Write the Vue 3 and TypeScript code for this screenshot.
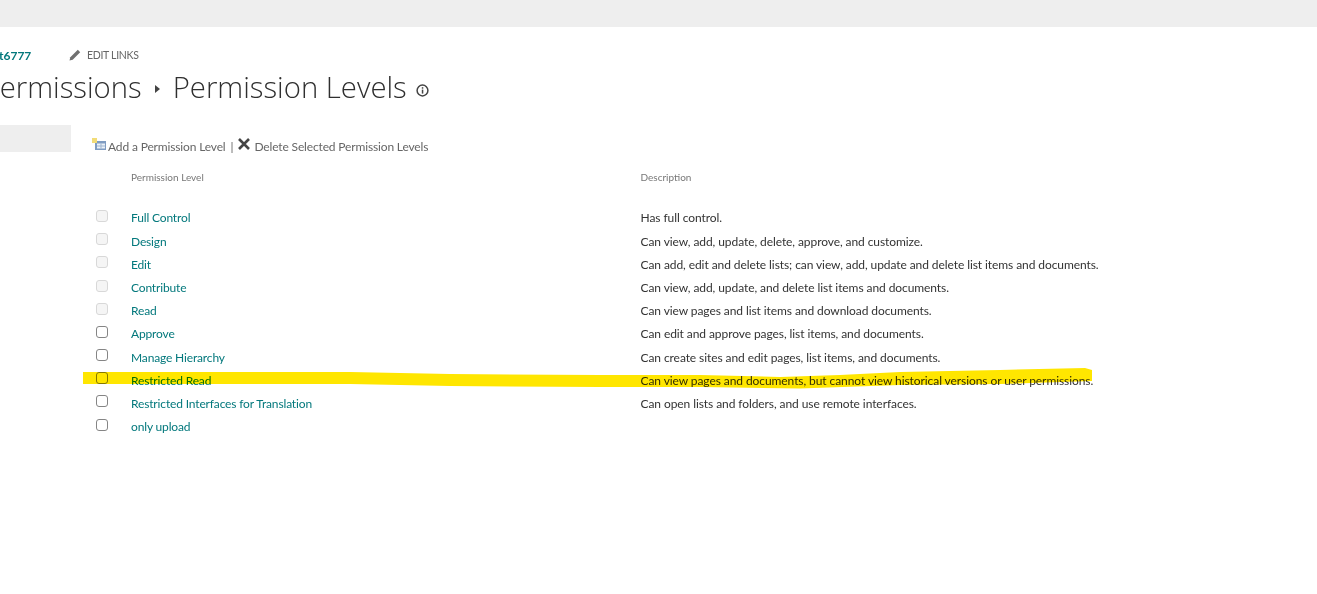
<script setup lang="ts">
interface Level { name: string; desc: string; locked: boolean }
const levels: Level[] = [
  { name: 'Full Control', desc: 'Has full control.', locked: true },
  { name: 'Design', desc: 'Can view, add, update, delete, approve, and customize.', locked: true },
  { name: 'Edit', desc: 'Can add, edit and delete lists; can view, add, update and delete list items and documents.', locked: true },
  { name: 'Contribute', desc: 'Can view, add, update, and delete list items and documents.', locked: true },
  { name: 'Read', desc: 'Can view pages and list items and download documents.', locked: true },
  { name: 'Approve', desc: 'Can edit and approve pages, list items, and documents.', locked: false },
  { name: 'Manage Hierarchy', desc: 'Can create sites and edit pages, list items, and documents.', locked: false },
  { name: 'Restricted Read', desc: 'Can view pages and documents, but cannot view historical versions or user permissions.', locked: false },
  { name: 'Restricted Interfaces for Translation', desc: 'Can open lists and folders, and use remote interfaces.', locked: false },
  { name: 'only upload', desc: '', locked: false },
]
</script>

<template>
  <div class="page">
    <div class="topbar"></div>
    <div class="crumbs">
      <a class="site">t6777</a>
      <span class="edit">
        <svg class="pencil" width="12" height="12" viewBox="0 0 12 12"><path d="M0.500 11.500l.8-3.200L8.800 0.800l2.400 2.400L3.700 10.700z" fill="#707070" /></svg>
        EDIT LINKS
      </span>
    </div>
    <div class="title">
      <span class="t-clip">Permissions</span>
      <span class="arrow"></span>
      <span>Permission Levels</span>
      <svg class="info" width="13" height="13" viewBox="0 0 13 13">
        <circle cx="6.500" cy="6.500" r="5.400" fill="none" stroke="#444" stroke-width="1.500" />
        <rect x="5.800" y="5.600" width="1.500" height="4" fill="#444" />
        <rect x="5.800" y="3.200" width="1.500" height="1.500" fill="#444" />
      </svg>
    </div>
    <div class="body">
      <div class="side"></div>
      <div class="main">
        <div class="toolbar">
          <svg class="add" width="14" height="12" viewBox="0 0 14 12">
            <rect x="3" y="3" width="11" height="9" fill="#7f9cc2" />
            <rect x="5" y="5.500" width="8" height="5" fill="#eaf0f7" />
            <path d="M5 8h8M9 5.500v5" stroke="#9db4d0" stroke-width="1" />
            <rect x="0" y="0" width="5" height="5" fill="#f2dc78" />
          </svg>
          <span>Add a Permission Level</span>
          <span class="sep">|</span>
          <svg class="del" width="12" height="12" viewBox="0 0 12 12">
            <path d="M1 1l10 10M11 1L1 11" stroke="#444" stroke-width="2.600" />
          </svg>
          <span>Delete Selected Permission Levels</span>
        </div>
        <div class="grid head">
          <span></span>
          <span>Permission Level</span>
          <span>Description</span>
        </div>
        <div class="rows">
          <div v-for="l in levels" :key="l.name" class="grid row">
            <span class="box" :class="{ locked: l.locked }"></span>
            <a class="name">{{ l.name }}</a>
            <span class="desc">{{ l.desc }}</span>
          </div>
        </div>
      </div>
    </div>
    <svg class="marker" width="1317" height="594" viewBox="0 0 1317 594">
      <path d="M83 372 L350 372 L450 374 L600 375 L700 375 L780 377 L840 375 L900 372 L1000 370 L1085 368 L1092 370 L1092 381 L1000 384 L900 385 L800 388.500 L700 387 L600 387 L450 386 L350 384 L83 384 Z" fill="#ffe600" />
    </svg>
  </div>
</template>

<style>
html, body { margin: 0; background: #fff; }
</style>

<style scoped>
.page {
  position: relative;
  width: 1317px;
  height: 594px;
  overflow: hidden;
  background: #fff;
  font-family: Lato, "Open Sans", sans-serif;
  color: #444;
}
.topbar { height: 27px; background: #eeeeee; }
.crumbs {
  display: flex;
  align-items: center;
  height: 16px;
  margin-top: 20px;
  margin-left: -1px;
  font-size: 12px;
}
.site { color: #03787c; font-weight: 700; width: 70px; flex: none; }
.edit { display: flex; align-items: center; gap: 6px; font-size: 10.500px; letter-spacing: -0.300px; color: #666; }
.title {
  display: flex;
  align-items: center;
  height: 40px;
  margin-top: 4px;
  margin-left: -17.500px;
  font-family: "Open Sans", sans-serif;
  font-size: 29.300px;
  font-weight: 300;
  color: #2f2f2f;
  white-space: nowrap;
}
.arrow {
  width: 0;
  height: 0;
  margin: 4px 13px 0 13px;
  border-left: 5px solid #444;
  border-top: 4px solid transparent;
  border-bottom: 4px solid transparent;
}
.info { margin: 6px 0 0 9px; }
.body { display: flex; margin-top: 18px; }
.side { width: 71px; height: 27px; flex: none; background: #eeeeee; }
.main { margin-left: 21px; flex: 1; }
.toolbar {
  display: flex;
  align-items: center;
  height: 20px;
  margin-top: 11px;
  font-size: 12px;
  letter-spacing: -0.150px;
  color: #666;
  white-space: nowrap;
}
.add { margin: -5px 2px 0 0; }
.sep { margin: 0 5px; }
.del { margin: -4px 4px 0 0; }
.grid { display: grid; grid-template-columns: 39px 509.500px 1fr; align-items: center; }
.head { margin-top: 12px; height: 18px; font-size: 10px; color: #777; }
.rows { margin-top: 20.400px; }
.row { height: 23.200px; font-size: 12px; }
.box {
  box-sizing: border-box;
  width: 12px;
  height: 12px;
  margin-left: 4px;
  margin-top: -4px;
  border: 1px solid #858585;
  border-radius: 3px;
  background: #fff;
}
.box.locked { border-color: #d8d8d8; background: #f5f5f5; }
.name { color: #03787c; letter-spacing: -0.150px; }
.desc { color: #333; letter-spacing: -0.080px; }
.marker { position: absolute; left: 0; top: 0; mix-blend-mode: multiply; pointer-events: none; }
</style>
